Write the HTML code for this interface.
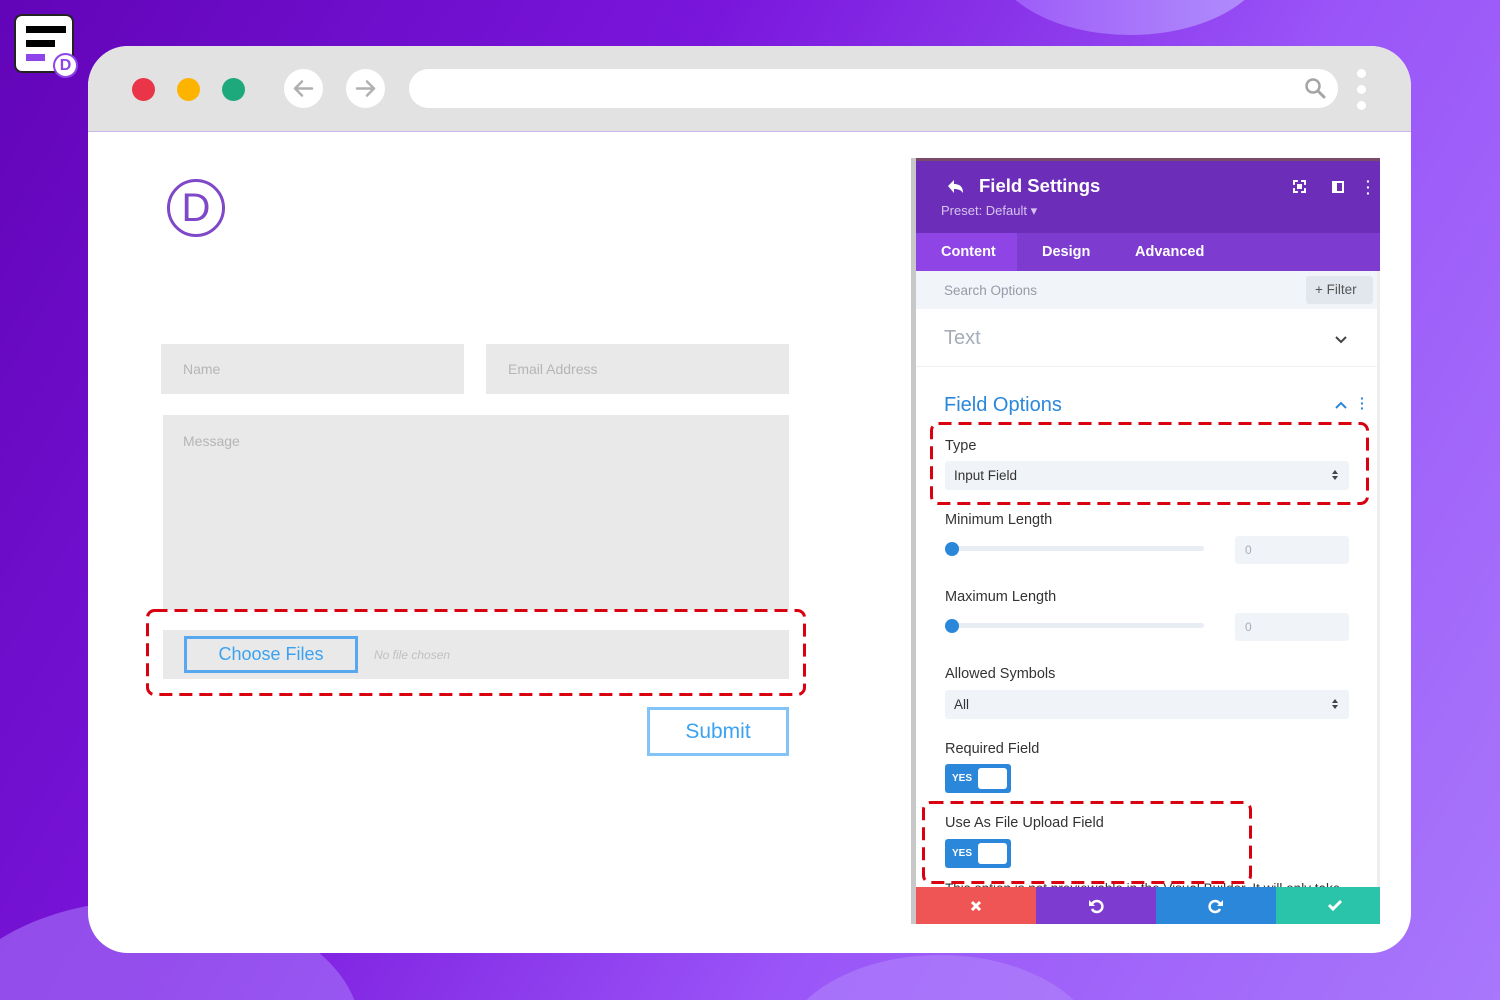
<!DOCTYPE html>
<html style="width:1500px;height:1000px;overflow:hidden"><head><meta charset="utf-8"><style>
*{box-sizing:border-box;margin:0;padding:0}
body{width:1500px;height:1000px;overflow:hidden;position:relative;font-family:"Liberation Sans",sans-serif;background:linear-gradient(120deg,#6204b8 0%,#7a16dc 35%,#9a55f8 65%,#a877fb 100%)}
.bg{position:absolute;left:0;top:0;width:1500px;height:1000px;overflow:hidden}
.blob{position:absolute;border-radius:50%}
.win{position:absolute;left:88px;top:46px;width:1323px;height:907px;background:#fff;border-radius:40px;overflow:hidden}
.bar{position:absolute;left:0;top:0;width:100%;height:86px;background:#e2e2e2;border-bottom:1px solid #cdb7ee}
.dot{position:absolute;top:32px;width:23px;height:23px;border-radius:50%}
.nav{position:absolute;top:23px;width:39px;height:39px;border-radius:50%;background:#fff}
.url{position:absolute;left:321px;top:23px;width:929px;height:39px;border-radius:20px;background:#fff}
.field{position:absolute;background:#e9e9e9;color:#b5b5b5;font-size:14px}
.dash{position:absolute;overflow:visible}
.p{position:absolute;font-family:"Liberation Sans",sans-serif}
.lbl{position:absolute;left:945px;font-size:14.5px;color:#333;font-family:"Liberation Sans",sans-serif}
.sel{position:absolute;left:945px;width:404px;height:29px;background:#f0f3f7;border-radius:3px;font-size:13.5px;color:#333;padding:7px 9px}
.sel:after{content:"";position:absolute;right:11px;top:9px;border:3px solid transparent;border-bottom:4px solid #444;border-top:0}
.sel:before{content:"";position:absolute;right:11px;top:15px;border:3px solid transparent;border-top:4px solid #444;border-bottom:0}
.track{position:absolute;left:945px;width:259px;height:5px;background:#e8edf3;border-radius:3px}
.knob{position:absolute;left:945px;width:14px;height:14px;border-radius:50%;background:#2b87da}
.num{position:absolute;left:1235px;width:114px;height:28px;background:#f0f3f7;border-radius:3px;color:#aab;font-size:12px;padding:7px 10px}
.tog{position:absolute;left:945px;width:66px;height:29px;background:#2b87da;border-radius:3px}
.tog b{position:absolute;left:7px;top:9px;color:#fff;font-size:10px}
.tog i{position:absolute;right:4px;top:4px;width:29px;height:21px;background:#fff;border-radius:3px}
</style></head><body>
<div class="bg">
<div class="blob" style="left:990px;top:-130px;width:280px;height:165px;background:linear-gradient(90deg,#9c58f8,#b290fc)"></div>
<div class="blob" style="left:-60px;top:900px;width:420px;height:260px;background:#a774f8;opacity:.6"></div>
<div class="blob" style="left:780px;top:955px;width:320px;height:200px;background:#b48cfb;opacity:.5"></div>
</div>
<div style="position:absolute;left:14px;top:14px;width:60px;height:59px;background:#fff;border:2px solid #222;border-radius:8px">
<div style="position:absolute;left:10px;top:10px;width:40px;height:7px;background:#000"></div>
<div style="position:absolute;left:10px;top:24px;width:29px;height:7px;background:#000"></div>
<div style="position:absolute;left:10px;top:38px;width:19px;height:7px;background:#8f44ea"></div>
</div>
<div style="position:absolute;left:53px;top:53px;width:25px;height:25px;border-radius:50%;background:#fff;border:2px solid #8f44ea;color:#8f44ea;font-weight:bold;font-size:16px;text-align:center;line-height:21px">D</div>

<div class="win">
<div class="bar">
<div class="dot" style="left:44px;background:#ea3448"></div>
<div class="dot" style="left:89px;background:#fdb400"></div>
<div class="dot" style="left:134px;background:#1ea97c"></div>
<div class="nav" style="left:196px"><svg width="39" height="39"><path d="M11 19.5h17M11 19.5l7-7M11 19.5l7 7" stroke="#b0b0b0" stroke-width="2.5" fill="none" stroke-linecap="round"/></svg></div>
<div class="nav" style="left:258px"><svg width="39" height="39"><path d="M11 19.5h17M28 19.5l-7-7M28 19.5l-7 7" stroke="#b0b0b0" stroke-width="2.5" fill="none" stroke-linecap="round"/></svg></div>
<div class="url"><svg style="position:absolute;right:10px;top:8px" width="24" height="24"><circle cx="9" cy="9" r="6.5" stroke="#a5a5a5" stroke-width="2.5" fill="none"/><path d="M14 14l6 6" stroke="#a5a5a5" stroke-width="3" stroke-linecap="round"/></svg></div>
<div style="position:absolute;left:1269px;top:23px;width:9px;height:9px;border-radius:50%;background:#fff"></div>
<div style="position:absolute;left:1269px;top:39px;width:9px;height:9px;border-radius:50%;background:#fff"></div>
<div style="position:absolute;left:1269px;top:55px;width:9px;height:9px;border-radius:50%;background:#fff"></div>
</div>
</div>

<div style="position:absolute;left:167px;top:179px;width:58px;height:58px;border:3px solid #7e48c8;border-radius:50%;color:#7e48c8;font-size:40px;text-align:center;line-height:52px">D</div>
<div class="field" style="left:161px;top:344px;width:303px;height:50px;padding:17px 22px">Name</div>
<div class="field" style="left:486px;top:344px;width:303px;height:50px;padding:17px 22px">Email Address</div>
<div class="field" style="left:163px;top:415px;width:626px;height:195px;padding:18px 20px">Message</div>
<div class="field" style="left:163px;top:630px;width:626px;height:49px"></div>
<div style="position:absolute;left:184px;top:636px;width:174px;height:37px;border:3px solid #58a8f0;color:#3ba2f2;font-size:18px;text-align:center;line-height:31px">Choose Files</div>
<div style="position:absolute;left:374px;top:648px;color:#c0c0c0;font-size:12px;font-style:italic">No file chosen</div>
<svg class="dash" style="left:146px;top:609px" width="660" height="87"><rect x="1.5" y="1.5" width="657" height="84" rx="7" fill="none" stroke="#d9000f" stroke-width="3" stroke-dasharray="13 7"/></svg>
<div style="position:absolute;left:647px;top:707px;width:142px;height:49px;border:3px solid #82c4f7;color:#3ba2f2;font-size:21px;text-align:center;line-height:43px">Submit</div>

<div style="position:absolute;left:911px;top:158px;width:5px;height:766px;background:#c8c8c8"></div>
<div style="position:absolute;left:916px;top:158px;width:464px;height:766px;background:#fff;border-right:3px solid #eee"></div>
<div style="position:absolute;left:916px;top:158px;width:464px;height:75px;background:#6c2eb9;border-top:3px solid #7a4a6a"></div>
<svg class="p" style="left:945px;top:178px" width="20" height="18"><path d="M3 8l6-6v4c6 0 9 3 9 9-2-3-5-4-9-4v4z" fill="#fff"/></svg>
<div class="p" style="left:979px;top:175px;color:#fff;font-size:18.5px;font-weight:bold">Field Settings</div>
<div class="p" style="left:941px;top:203px;color:#d6c4ee;font-size:13px">Preset: Default ▾</div>
<div class="p" style="left:1293px;top:180px;width:13px;height:13px;border:2px dashed #fff"><div style="margin:2px;width:5px;height:5px;background:#fff"></div></div>
<div class="p" style="left:1332px;top:181px;width:12px;height:12px;border:2px solid #fff;border-left-width:5px"></div>
<div class="p" style="left:1366px;top:178px;color:#fff;font-size:14px;font-weight:bold;line-height:6px">·<br>·<br>·</div>
<div style="position:absolute;left:916px;top:233px;width:464px;height:38px;background:#7e3bd0"></div>
<div style="position:absolute;left:916px;top:233px;width:101px;height:38px;background:#8f45e6"></div>
<div class="p" style="left:941px;top:244px;color:#fff;font-size:14.5px;font-weight:bold">Content</div>
<div class="p" style="left:1042px;top:244px;color:#fff;font-size:14.5px;font-weight:bold">Design</div>
<div class="p" style="left:1135px;top:244px;color:#fff;font-size:14.5px;font-weight:bold">Advanced</div>
<div style="position:absolute;left:916px;top:271px;width:461px;height:38px;background:#f1f4f8"></div>
<div class="p" style="left:944px;top:283px;color:#99a;font-size:13.5px">Search Options</div>
<div class="p" style="left:1306px;top:276px;width:67px;height:28px;background:#e2e7ee;border-radius:3px;color:#555;font-size:13.5px;padding:6px 9px">+ Filter</div>
<div class="p" style="left:944px;top:327px;color:#a5adb8;font-size:20px">Text</div>
<svg class="p" style="left:1335px;top:335px" width="12" height="10"><path d="M1 2l5 5 5-5" stroke="#444" stroke-width="2" fill="none"/></svg>
<div style="position:absolute;left:916px;top:366px;width:461px;height:1px;background:#eef0f3"></div>
<div class="p" style="left:944px;top:394px;color:#2b87da;font-size:20px">Field Options</div>
<svg class="p" style="left:1335px;top:400px" width="12" height="10"><path d="M1 8l5-5 5 5" stroke="#2b87da" stroke-width="2" fill="none"/></svg>
<div class="p" style="left:1360px;top:396px;color:#2b87da;font-size:14px;font-weight:bold;line-height:5px">·<br>·<br>·</div>
<div class="lbl" style="top:438px">Type</div>
<div class="sel" style="top:461px">Input Field</div>
<svg class="dash" style="left:930px;top:422px" width="439" height="83"><rect x="1.5" y="1.5" width="436" height="80" rx="7" fill="none" stroke="#d9000f" stroke-width="3" stroke-dasharray="13 7"/></svg>
<div class="lbl" style="top:512px">Minimum Length</div>
<div class="track" style="top:546px"></div><div class="knob" style="top:542px"></div>
<div class="num" style="top:536px">0</div>
<div class="lbl" style="top:589px">Maximum Length</div>
<div class="track" style="top:623px"></div><div class="knob" style="top:619px"></div>
<div class="num" style="top:613px">0</div>
<div class="lbl" style="top:666px">Allowed Symbols</div>
<div class="sel" style="top:690px">All</div>
<div class="lbl" style="top:741px">Required Field</div>
<div class="tog" style="top:764px"><b>YES</b><i></i></div>
<div class="lbl" style="top:815px">Use As File Upload Field</div>
<div class="tog" style="top:839px"><b>YES</b><i></i></div>
<div class="lbl" style="top:878px;font-size:13.5px;height:9px;overflow:hidden;line-height:22px">This option is not previewable in the Visual Builder. It will only take</div>
<svg class="dash" style="left:922px;top:801px" width="330" height="83"><rect x="1.5" y="1.5" width="327" height="80" rx="7" fill="none" stroke="#d9000f" stroke-width="3" stroke-dasharray="13 7"/></svg>
<div style="position:absolute;left:916px;top:887px;width:120px;height:37px;background:#ef5555"><svg style="position:absolute;left:54px;top:13px" width="12" height="12"><path d="M2 2l8 8M10 2l-8 8" stroke="#fff" stroke-width="3"/></svg></div>
<div style="position:absolute;left:1036px;top:887px;width:120px;height:37px;background:#7e3bd0"><svg style="position:absolute;left:52px;top:11px" width="16" height="16"><path d="M4 6a5.5 5.5 0 1 1 0 5" stroke="#fff" stroke-width="2.5" fill="none"/><path d="M1 2v6h6z" fill="#fff"/></svg></div>
<div style="position:absolute;left:1156px;top:887px;width:120px;height:37px;background:#2b87da"><svg style="position:absolute;left:52px;top:11px" width="16" height="16"><path d="M12 6a5.5 5.5 0 1 0 0 5" stroke="#fff" stroke-width="2.5" fill="none"/><path d="M15 2v6h-6z" fill="#fff"/></svg></div>
<div style="position:absolute;left:1276px;top:887px;width:104px;height:37px;background:#29c4a9"><svg style="position:absolute;left:52px;top:12px" width="14" height="12"><path d="M1 6l4 4 8-8" stroke="#fff" stroke-width="3" fill="none"/></svg></div>
</body></html>
